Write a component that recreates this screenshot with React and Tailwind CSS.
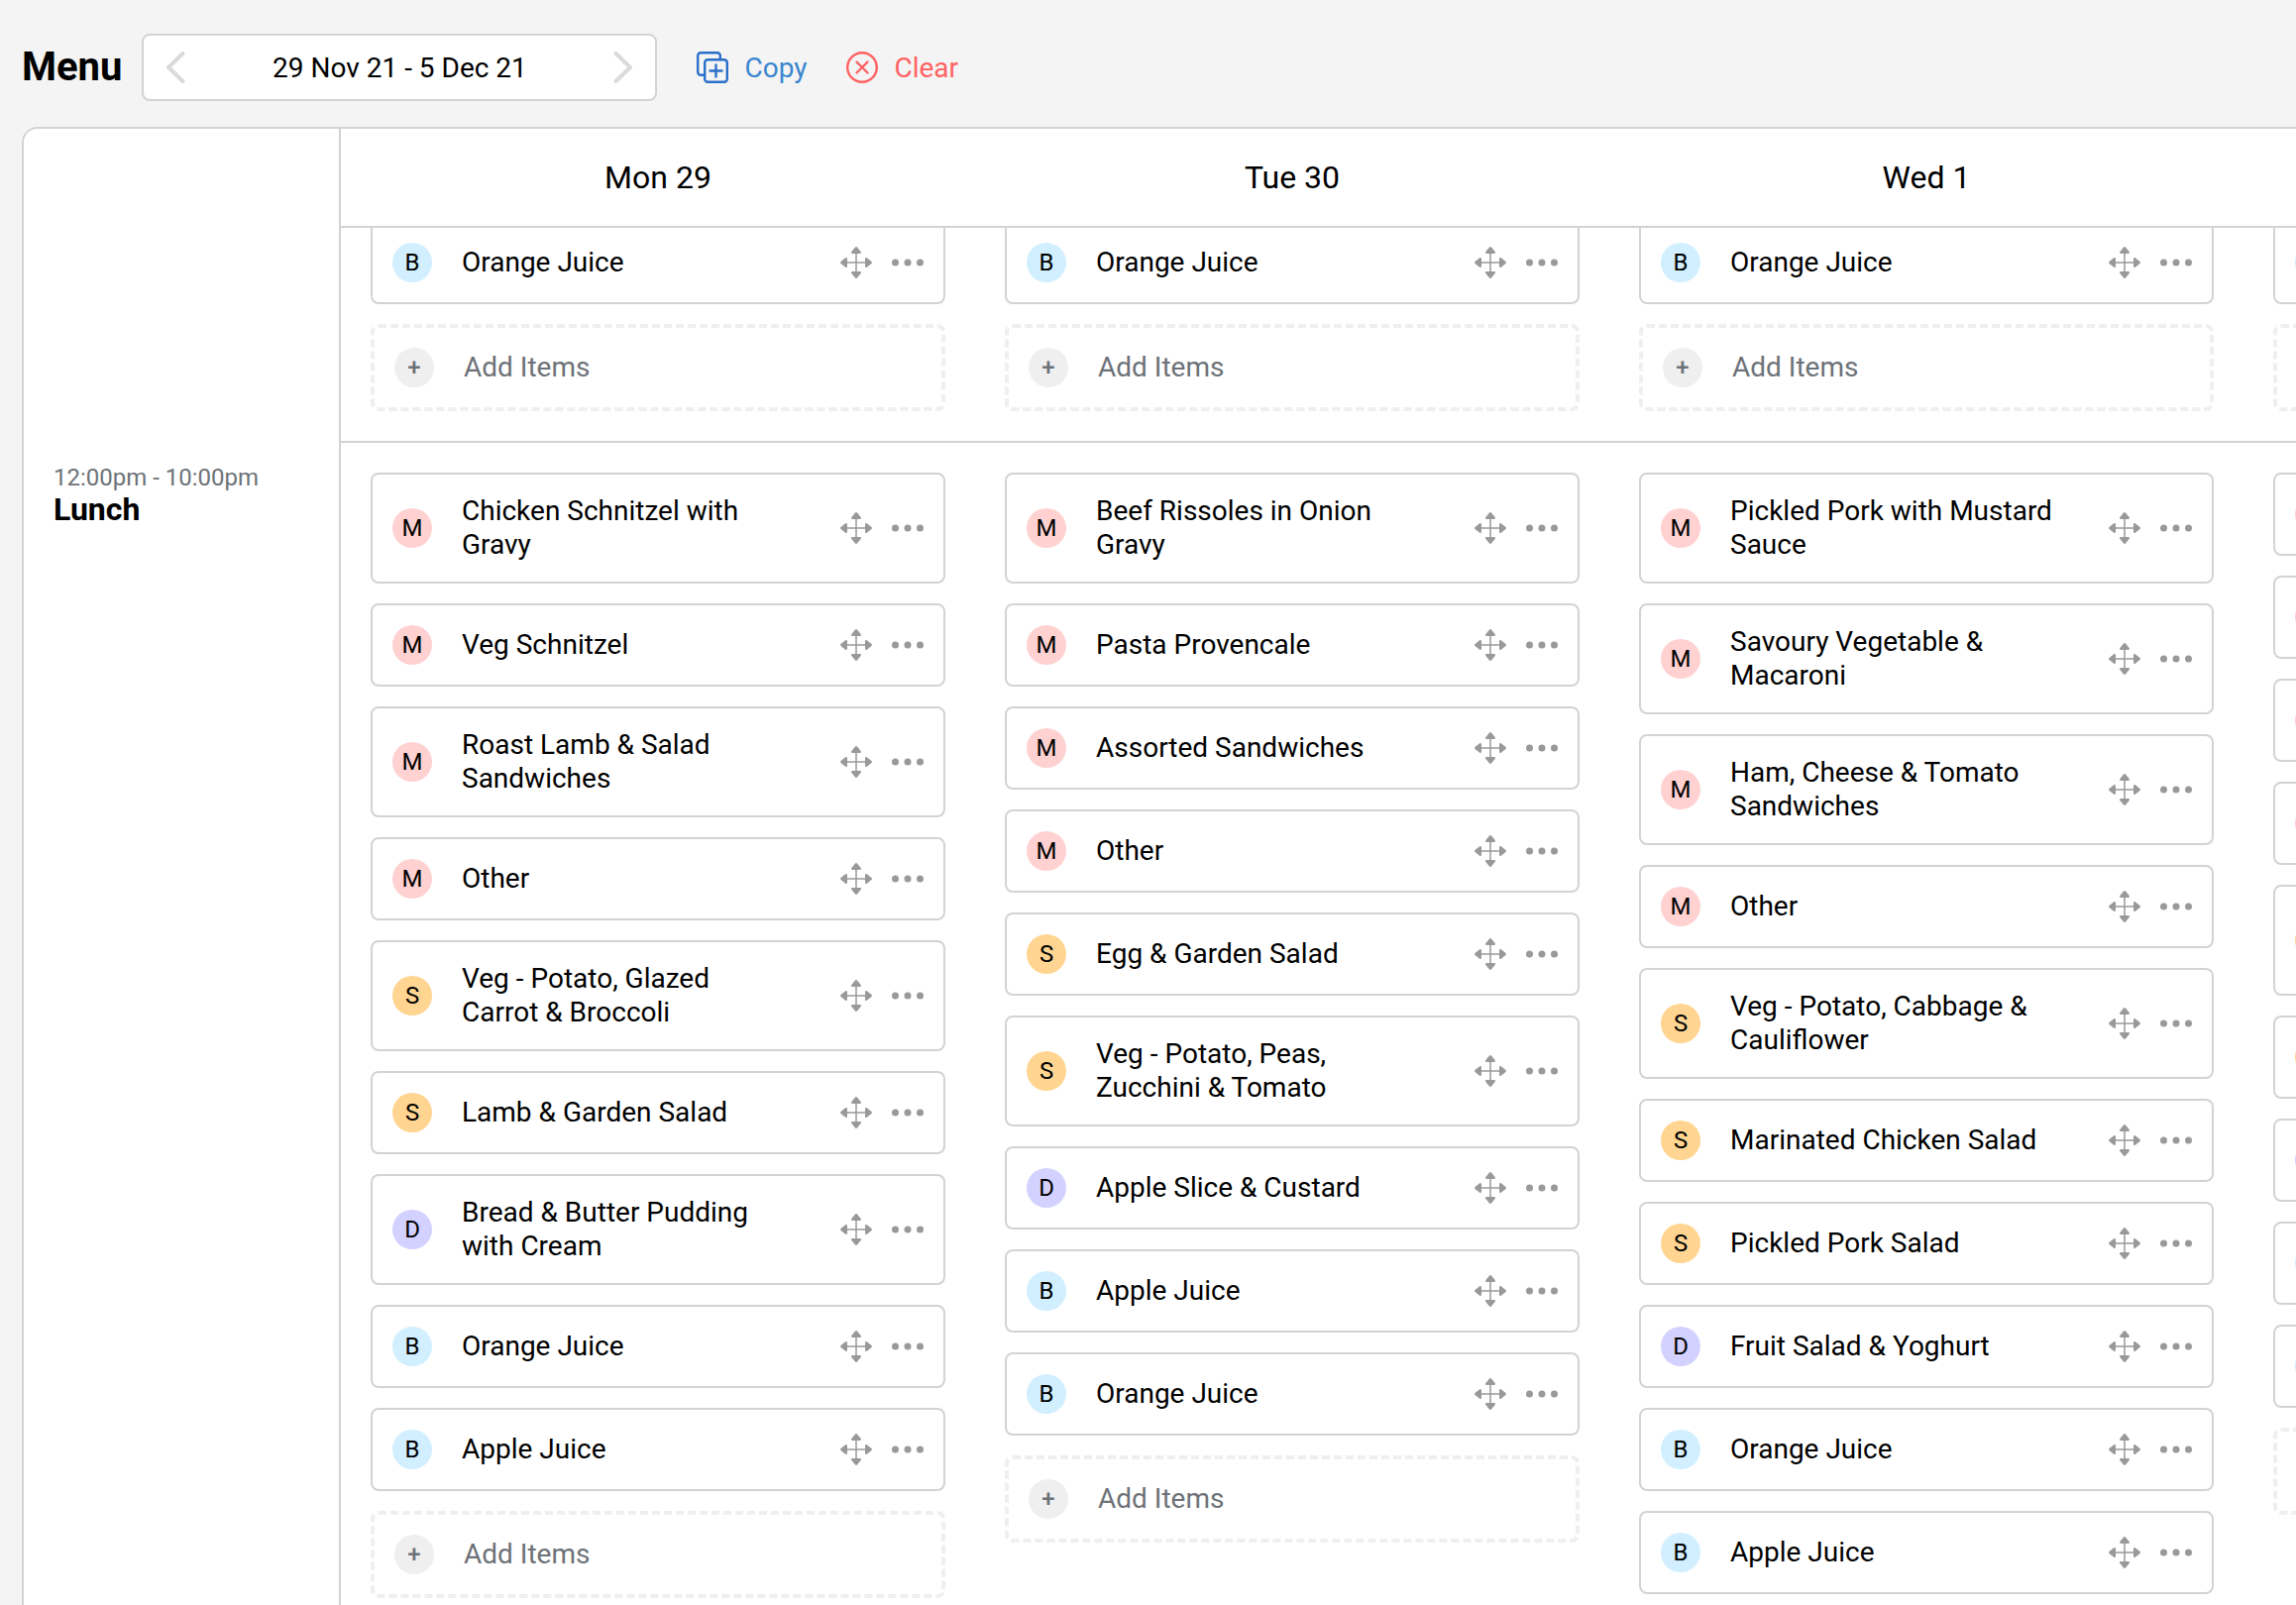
const BADGES = {
  M: "bg-[#ffd1d1]",
  S: "bg-[#ffd591]",
  D: "bg-[#d3d1ff]",
  B: "bg-[#d1efff]",
};

const DAYS = ["Mon 29", "Tue 30", "Wed 1", "Thu 2"];

const LUNCH = [
  [
    ["M", "Chicken Schnitzel with Gravy"],
    ["M", "Veg Schnitzel"],
    ["M", "Roast Lamb & Salad Sandwiches"],
    ["M", "Other"],
    ["S", "Veg - Potato, Glazed Carrot & Broccoli"],
    ["S", "Lamb & Garden Salad"],
    ["D", "Bread & Butter Pudding with Cream"],
    ["B", "Orange Juice"],
    ["B", "Apple Juice"],
  ],
  [
    ["M", "Beef Rissoles in Onion Gravy"],
    ["M", "Pasta Provencale"],
    ["M", "Assorted Sandwiches"],
    ["M", "Other"],
    ["S", "Egg & Garden Salad"],
    ["S", "Veg - Potato, Peas, Zucchini & Tomato"],
    ["D", "Apple Slice & Custard"],
    ["B", "Apple Juice"],
    ["B", "Orange Juice"],
  ],
  [
    ["M", "Pickled Pork with Mustard Sauce"],
    ["M", "Savoury Vegetable & Macaroni"],
    ["M", "Ham, Cheese & Tomato Sandwiches"],
    ["M", "Other"],
    ["S", "Veg - Potato, Cabbage & Cauliflower"],
    ["S", "Marinated Chicken Salad"],
    ["S", "Pickled Pork Salad"],
    ["D", "Fruit Salad & Yoghurt"],
    ["B", "Orange Juice"],
    ["B", "Apple Juice"],
  ],
  [
    ["M", "Veg Schnitzel"],
    ["M", "Pasta Provencale"],
    ["M", "Assorted Sandwiches"],
    ["M", "Other"],
    ["S", "Veg - Potato, Glazed Carrot & Broccoli"],
    ["S", "Egg & Garden Salad"],
    ["D", "Fruit Salad & Yoghurt"],
    ["B", "Orange Juice"],
    ["B", "Apple Juice"],
  ],
];

const BREAKFAST = DAYS.map(() => [["B", "Orange Juice"]]);

const ARROW_HEAD = "M15 .5q1-.8 2 0l3.800 4.700q.7 1.500-.8 1.800h-8q-1.500-.3-.8-1.800z";

function Chevron({ d }) {
  return (
    <svg viewBox="0 0 20 32" className="h-8 w-5" fill="none" stroke="#dadada" strokeWidth="4" strokeLinecap="round" strokeLinejoin="round" aria-hidden="true">
      <path d={d} />
    </svg>
  );
}

function CopyIcon() {
  return (
    <svg viewBox="0 0 32 32" className="size-8" fill="none" stroke="#2a6fc9" strokeWidth="2.400" strokeLinecap="round" strokeLinejoin="round" aria-hidden="true">
      <path d="M8 23.800H4.200a3 3 0 0 1-3-3V4.200a3 3 0 0 1 3-3h16.600a3 3 0 0 1 3 3V8" />
      <rect x="8.200" y="8.200" width="22.600" height="22.600" rx="3" />
      <path d="M19.500 13.500v12M13.500 19.500h12" />
    </svg>
  );
}

function ClearIcon() {
  return (
    <svg viewBox="0 0 32 32" className="size-8" fill="none" stroke="#ff6262" strokeWidth="2.400" strokeLinecap="round" aria-hidden="true">
      <circle cx="16" cy="16" r="14.800" />
      <path d="M10.500 10.500l11 11M21.500 10.500l-11 11" />
    </svg>
  );
}

function MoveIcon() {
  return (
    <svg viewBox="0 0 32 32" className="size-8" fill="#999" aria-hidden="true">
      <path d="M16 4v24M4 16h24" stroke="#999" strokeWidth="1.500" />
      <path d={ARROW_HEAD} />
      <path d={ARROW_HEAD} transform="rotate(90 16 16)" />
      <path d={ARROW_HEAD} transform="rotate(180 16 16)" />
      <path d={ARROW_HEAD} transform="rotate(270 16 16)" />
    </svg>
  );
}

function DotsIcon() {
  return (
    <svg viewBox="0 0 32 32" className="size-8" fill="#999" aria-hidden="true">
      <circle cx="3.500" cy="16" r="3.500" />
      <circle cx="16" cy="16" r="3.500" />
      <circle cx="28.500" cy="16" r="3.500" />
    </svg>
  );
}

function MenuCard({ kind, name }) {
  return (
    <li className="flex items-center rounded-lg border-2 border-[#d3d3d3] bg-white p-5">
      <span className={`flex size-10 shrink-0 items-center justify-center rounded-full text-2xl ${BADGES[kind]}`}>{kind}</span>
      <span className="mr-[50px] ml-[30px] flex-1 leading-[34px]">{name}</span>
      <button type="button" aria-label={`Move ${name}`} className="mr-5 shrink-0">
        <MoveIcon />
      </button>
      <button type="button" aria-label={`Options for ${name}`} className="shrink-0">
        <DotsIcon />
      </button>
    </li>
  );
}

function DayColumn({ items }) {
  return (
    <div className="w-[640px] shrink-0 px-[30px]">
      <ul className="flex flex-col gap-5">
        {items.map(([kind, name], i) => (
          <MenuCard key={i} kind={kind} name={name} />
        ))}
      </ul>
      <button type="button" className="mt-5 flex w-full items-center rounded-lg border-4 border-dashed border-[#efefef] p-5 text-[#6d7278]">
        <span className="flex size-10 items-center justify-center rounded-full bg-[#efefef] text-2xl font-medium">+</span>
        <span className="ml-[30px] leading-[34px]">Add Items</span>
      </button>
    </div>
  );
}

export default function App() {
  return (
    <div className="flex h-screen flex-col overflow-hidden bg-[#f4f4f4] pl-[22px] font-[Roboto,sans-serif] text-[28px] text-black">
      <header className="flex shrink-0 items-center pt-[34px] pb-[26px]">
        <h1 className="text-[40px] leading-[50px] font-bold">Menu</h1>
        <div className="ml-5 flex h-[68px] w-[520px] items-center justify-between rounded-lg border-2 border-[#d3d3d3] bg-white px-[22px]">
          <button type="button" aria-label="Previous week">
            <Chevron d="M17.500 2L3 16l14.500 14" />
          </button>
          <span className="leading-[35px]">29 Nov 21 - 5 Dec 21</span>
          <button type="button" aria-label="Next week">
            <Chevron d="M2.500 2L17 16 2.500 30" />
          </button>
        </div>
        <button type="button" className="ml-10 flex items-center gap-4 leading-[35px] text-[#3a86cf]">
          <CopyIcon />
          Copy
        </button>
        <button type="button" className="ml-10 flex items-center gap-4 leading-[35px] text-[#ff6262]">
          <ClearIcon />
          Clear
        </button>
      </header>

      <main className="flex min-h-0 flex-1 flex-col overflow-hidden rounded-tl-2xl border-t-2 border-l-2 border-[#d3d3d3] bg-white">
        <div className="flex h-[100px] shrink-0">
          <div className="w-80 shrink-0 border-r-2 border-[#d3d3d3]" />
          <div className="flex flex-1 overflow-hidden border-b-2 border-[#d3d3d3]">
            {DAYS.map((day) => (
              <h2 key={day} className="flex w-[640px] shrink-0 items-center justify-center text-[32px]">
                {day}
              </h2>
            ))}
          </div>
        </div>

        <div className="flex min-h-0 flex-1 flex-col overflow-hidden">
          <section className="-mt-[7px] flex shrink-0" aria-label="Breakfast">
            <div className="w-80 shrink-0 border-r-2 border-[#d3d3d3]" />
            <div className="flex flex-1 overflow-hidden border-b-2 border-[#d3d3d3] pb-[30px]">
              {BREAKFAST.map((items, i) => (
                <DayColumn key={i} items={items} />
              ))}
            </div>
          </section>
          <section className="flex shrink-0" aria-label="Lunch">
            <div className="w-80 shrink-0 border-r-2 border-[#d3d3d3] pt-5 pl-[30px]">
              <p className="text-2xl leading-[30px] text-[#6d7278]">12:00pm - 10:00pm</p>
              <h3 className="text-[32px] leading-[34px] font-bold">Lunch</h3>
            </div>
            <div className="flex flex-1 overflow-hidden border-b-2 border-[#d3d3d3] py-[30px]">
              {LUNCH.map((items, i) => (
                <DayColumn key={i} items={items} />
              ))}
            </div>
          </section>
        </div>
      </main>
    </div>
  );
}
